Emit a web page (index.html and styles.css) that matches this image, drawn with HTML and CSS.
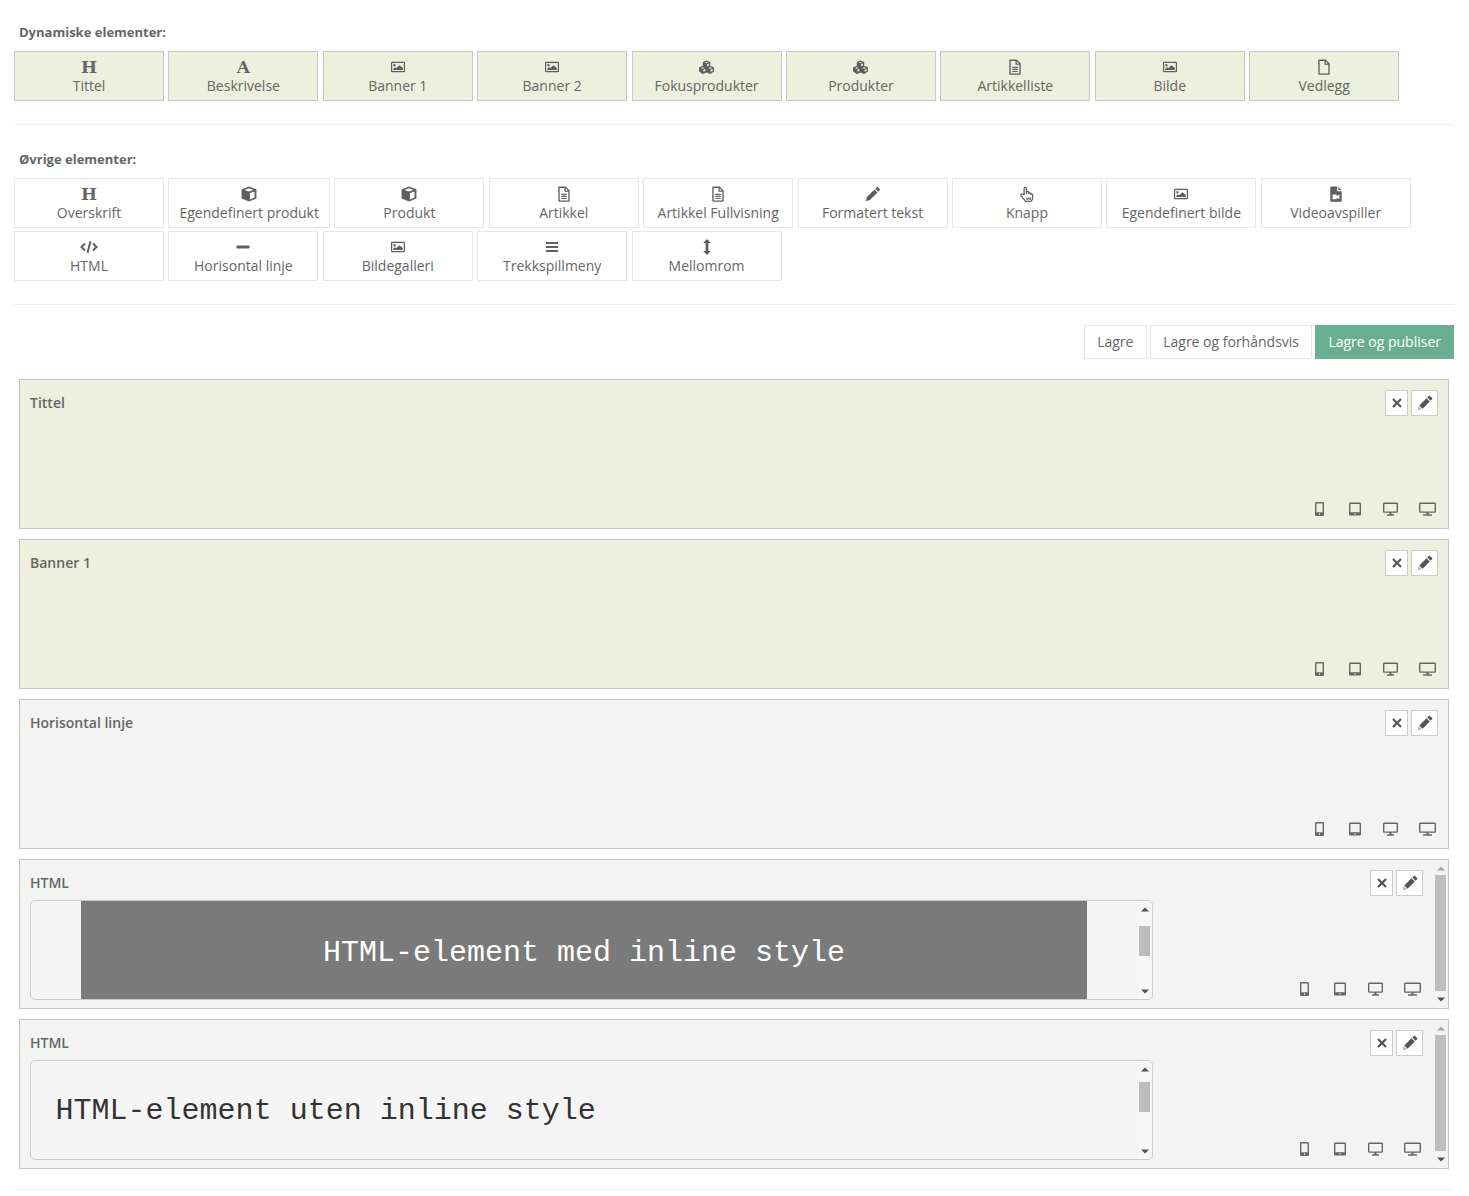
FILE: index.html
```html
<!DOCTYPE html>
<html lang="no">
<head>
<meta charset="utf-8">
<title>Elementer</title>
<link rel="stylesheet" href="styles.css">
</head>
<body>
<svg class="defs" width="0" height="0" aria-hidden="true">
  <symbol id="i-image" viewBox="0 0 14 14"><path fill-rule="evenodd" d="M1 1.700h12a1 1 0 0 1 1 1v8.600a1 1 0 0 1-1 1H1a1 1 0 0 1-1-1V2.700a1 1 0 0 1 1-1zM1.200 3v8h11.600V3zM3.400 4a1.200 1.200 0 1 1 0 2.400 1.200 1.200 0 0 1 0-2.400zM2.200 10V8.700l1.800-1.400 1.200 1 3.300-3.100L11.800 8v2z"/></symbol>
  <symbol id="i-cube" viewBox="0 0 14 14"><path fill-rule="evenodd" d="M7 .5l6.500 2.400v8L7 13.600.5 10.900v-8zM7 2L3 3.400 7 4.900l4-1.500zM7.800 6.300v5.500l4-1.700V4.800z"/></symbol>
  <symbol id="i-cubes" viewBox="0 0 16 14"><path fill-rule="evenodd" d="M8 .5l3.500 1.300v3.700l3.500 1.300v4L11.400 13 8 11.700 4.600 13 1 10.800v-4l3.500-1.300V1.800zM8 1.800L6.200 2.400 8 3.100l1.800-.7zM8.500 4v1.900l1.800-.7V3.300zM4.600 6.700l-1.800.7 1.800.7 1.800-.7zM11.400 6.700l-1.800.7 1.800.7 1.800-.7zM5.100 9v2l1.800-.8V8.300zM11.900 9v2l1.800-.8V8.300z"/></symbol>
  <symbol id="i-doc" viewBox="0 0 14 14"><path fill-rule="evenodd" d="M2.500.5h6L12 4v9a.8.8 0 0 1-.8.800H2.800A.8.800 0 0 1 2 13V1a.6.600 0 0 1 .500-.500zM3.200 1.700v10.900h7.600V5.100H7.400V1.700zM8.500 1.900V4h2zM4.600 6.800h4.800v1H4.600zM4.600 8.600h4.800v1H4.600zM4.600 10.400h4.800v1H4.600z"/></symbol>
  <symbol id="i-file" viewBox="0 0 14 14"><path fill-rule="evenodd" d="M2.500.5h6L12 4v9a.8.8 0 0 1-.8.800H2.800A.8.800 0 0 1 2 13V1a.6.600 0 0 1 .500-.500zM3.200 1.700v10.900h7.600V5.100H7.400V1.700zM8.500 1.900V4h2z"/></symbol>
  <symbol id="i-video" viewBox="0 0 14 14"><path fill-rule="evenodd" d="M2.500.5H8V4.500H12V13a.8.8 0 0 1-.8.800H2.800A.8.800 0 0 1 2 13V1a.6.600 0 0 1 .500-.500zM9 .8L11.800 3.500H9zM4 7.500v4h3.500v-1.300l2.500 1.300v-4L7.500 8.800V7.500z"/></symbol>
  <symbol id="i-pencil" viewBox="0 0 14 14"><path d="M10.300 1.100a.8.800 0 0 1 1.100 0l1.500 1.500a.8.800 0 0 1 0 1.100l-1.300 1.300-2.600-2.600zM8.300 3.100l2.600 2.600-6.600 6.600-3.600 1 1-3.600z"/></symbol>
  <symbol id="i-edit" viewBox="0 0 14 14"><path d="M10.300 .8a.8.800 0 0 1 1.100 0l1.800 1.800a.8.800 0 0 1 0 1.100l-1.300 1.300-2.900-2.900zM8.300 2.800l2.900 2.900-6.300 6.300-2.900-2.900z"/><path opacity=".45" d="M1.500 9.700l2.800 2.800-3.600 1z"/></symbol>
  <symbol id="i-hand" viewBox="0 0 14 14"><path fill="none" stroke="currentColor" stroke-width="1.100" stroke-linejoin="round" d="M4.500 7.500V2.200a1 1 0 0 1 2 0v4.300l.2-1a.9.9 0 0 1 1.800.2v.8a.9.900 0 0 1 1.700.1v.8a.9.900 0 0 1 1.700.2v3.100c0 1.100-.8 2.300-1.500 2.800H5.800L2 8.800c-.8-1 .3-2.300 1.300-1.600zM7 10v2M8.500 10v2M10 10v2"/></symbol>
  <symbol id="i-code" viewBox="0 0 18 14"><path fill="none" stroke="currentColor" stroke-width="2" d="M5 3.500L1.500 7 5 10.500M13 3.500L16.500 7 13 10.500M10.500 1.200L7.500 12.800"/></symbol>
  <symbol id="i-minus" viewBox="0 0 14 14"><rect x="0.500" y="5.600" width="13" height="2.800" rx=".6"/></symbol>
  <symbol id="i-bars" viewBox="0 0 14 14"><path d="M1 2h12v2H1zM1 6h12v2H1zM1 10h12v2H1z"/></symbol>
  <symbol id="i-vertical" viewBox="0 0 14 14"><path d="M7 0l3.400 3.500H8.200V10.500H10.400L7 14l-3.400-3.500H5.800V3.500H3.600z"/></symbol>
  <symbol id="i-close" viewBox="0 0 12 12"><path d="M2.800 1.200L6 4.400 9.200 1.200 10.800 2.800 7.600 6l3.200 3.200-1.600 1.600L6 7.600 2.800 10.800 1.200 9.200 4.400 6 1.200 2.800z"/></symbol>
  <symbol id="i-phone" viewBox="0 0 9 14"><path fill-rule="evenodd" d="M1.300 0h6.400A1.300 1.300 0 0 1 9 1.300v11.400A1.300 1.300 0 0 1 7.700 14H1.300A1.300 1.300 0 0 1 0 12.700V1.300A1.300 1.300 0 0 1 1.300 0zM1.400 1.400v8.800h6.200V1.400zM3.900 11.300v1.400h1.200v-1.400z"/></symbol>
  <symbol id="i-tablet" viewBox="0 0 12 14"><path fill-rule="evenodd" d="M1.300 .5h9.400A1.300 1.300 0 0 1 12 1.800v10.400a1.300 1.300 0 0 1-1.300 1.300H1.300A1.300 1.300 0 0 1 0 12.200V1.800A1.300 1.300 0 0 1 1.300 .5zM1.400 1.900v8.300h9.200V1.900zM5.400 11.200v1.300h1.200v-1.300z"/></symbol>
  <symbol id="i-monitor" viewBox="0 0 15 14"><path fill-rule="evenodd" d="M1.200 .5h12.600A1.200 1.200 0 0 1 15 1.700v7.900a1.200 1.200 0 0 1-1.200 1.200H8.600v1.500H11v1.500H4v-1.500h2.400v-1.500H1.200A1.200 1.200 0 0 1 0 9.600V1.700A1.200 1.200 0 0 1 1.200 .5zM1.400 1.900v7.500h12.200V1.900z"/></symbol>
  <symbol id="i-wide" viewBox="0 0 17 14"><path fill-rule="evenodd" d="M1.200 .5h14.600A1.200 1.200 0 0 1 17 1.700v7.900a1.200 1.200 0 0 1-1.200 1.200H9.600v1.500H13v1.500H4v-1.500h3.400v-1.500H1.200A1.200 1.200 0 0 1 0 9.600V1.700A1.200 1.200 0 0 1 1.200 .5zM1.400 1.900v7.500h14.200V1.900z"/></symbol>
  <symbol id="i-up" viewBox="0 0 8 5"><path d="M4 .5L8 4.500H0z"/></symbol>
  <symbol id="i-down" viewBox="0 0 8 5"><path d="M4 4.500L0 .5H8z"/></symbol>
</svg>

<main class="page">
  <section class="section section-first">
    <h2 class="section-title">Dynamiske elementer:</h2>
    <div class="tiles">
      <a class="tile tile-dyn"><span class="tile-icon glyph">H</span>Tittel</a>
      <a class="tile tile-dyn"><span class="tile-icon glyph">A</span>Beskrivelse</a>
      <a class="tile tile-dyn"><span class="tile-icon"><svg class="ico ico-img"><use href="#i-image"/></svg></span>Banner 1</a>
      <a class="tile tile-dyn"><span class="tile-icon"><svg class="ico ico-img"><use href="#i-image"/></svg></span>Banner 2</a>
      <a class="tile tile-dyn"><span class="tile-icon"><svg class="ico ico-wide"><use href="#i-cubes"/></svg></span>Fokusprodukter</a>
      <a class="tile tile-dyn"><span class="tile-icon"><svg class="ico ico-wide"><use href="#i-cubes"/></svg></span>Produkter</a>
      <a class="tile tile-dyn"><span class="tile-icon"><svg class="ico"><use href="#i-doc"/></svg></span>Artikkelliste</a>
      <a class="tile tile-dyn"><span class="tile-icon"><svg class="ico ico-img"><use href="#i-image"/></svg></span>Bilde</a>
      <a class="tile tile-dyn"><span class="tile-icon"><svg class="ico"><use href="#i-file"/></svg></span>Vedlegg</a>
    </div>
  </section>
  <hr class="rule">
  <section class="section">
    <h2 class="section-title">Øvrige elementer:</h2>
    <div class="tiles">
      <a class="tile"><span class="tile-icon glyph">H</span>Overskrift</a>
      <a class="tile tile-auto"><span class="tile-icon"><svg class="ico"><use href="#i-cube"/></svg></span>Egendefinert produkt</a>
      <a class="tile"><span class="tile-icon"><svg class="ico"><use href="#i-cube"/></svg></span>Produkt</a>
      <a class="tile"><span class="tile-icon"><svg class="ico"><use href="#i-doc"/></svg></span>Artikkel</a>
      <a class="tile"><span class="tile-icon"><svg class="ico"><use href="#i-doc"/></svg></span>Artikkel Fullvisning</a>
      <a class="tile"><span class="tile-icon"><svg class="ico"><use href="#i-pencil"/></svg></span>Formatert tekst</a>
      <a class="tile"><span class="tile-icon"><svg class="ico"><use href="#i-hand"/></svg></span>Knapp</a>
      <a class="tile"><span class="tile-icon"><svg class="ico ico-img"><use href="#i-image"/></svg></span>Egendefinert bilde</a>
      <a class="tile"><span class="tile-icon"><svg class="ico"><use href="#i-video"/></svg></span>Videoavspiller</a>
      <a class="tile"><span class="tile-icon"><svg class="ico ico-code"><use href="#i-code"/></svg></span>HTML</a>
      <a class="tile"><span class="tile-icon"><svg class="ico ico-img"><use href="#i-minus"/></svg></span>Horisontal linje</a>
      <a class="tile"><span class="tile-icon"><svg class="ico ico-img"><use href="#i-image"/></svg></span>Bildegalleri</a>
      <a class="tile"><span class="tile-icon"><svg class="ico ico-img"><use href="#i-bars"/></svg></span>Trekkspillmeny</a>
      <a class="tile"><span class="tile-icon"><svg class="ico"><use href="#i-vertical"/></svg></span>Mellomrom</a>
    </div>
  </section>
  <hr class="rule">
  <div class="toolbar">
    <button class="btn">Lagre</button>
    <button class="btn">Lagre og forhåndsvis</button>
    <button class="btn btn-primary">Lagre og publiser</button>
  </div>
  <div class="panels">
    <article class="panel panel-dyn">
      <div class="panel-main"><h3 class="panel-title">Tittel</h3></div>
      <div class="panel-side">
        <div class="actions">
          <a class="act act-x"><svg class="act-ico"><use href="#i-close"/></svg></a>
          <a class="act act-edit"><svg class="act-ico act-pen"><use href="#i-edit"/></svg></a>
        </div>
        <div class="devices">
          <svg class="dev dev-phone"><use href="#i-phone"/></svg>
          <svg class="dev dev-tablet"><use href="#i-tablet"/></svg>
          <svg class="dev dev-monitor"><use href="#i-monitor"/></svg>
          <svg class="dev dev-wide"><use href="#i-wide"/></svg>
        </div>
      </div>
    </article>
    <article class="panel panel-dyn">
      <div class="panel-main"><h3 class="panel-title">Banner 1</h3></div>
      <div class="panel-side">
        <div class="actions">
          <a class="act act-x"><svg class="act-ico"><use href="#i-close"/></svg></a>
          <a class="act act-edit"><svg class="act-ico act-pen"><use href="#i-edit"/></svg></a>
        </div>
        <div class="devices">
          <svg class="dev dev-phone"><use href="#i-phone"/></svg>
          <svg class="dev dev-tablet"><use href="#i-tablet"/></svg>
          <svg class="dev dev-monitor"><use href="#i-monitor"/></svg>
          <svg class="dev dev-wide"><use href="#i-wide"/></svg>
        </div>
      </div>
    </article>
    <article class="panel">
      <div class="panel-main"><h3 class="panel-title">Horisontal linje</h3></div>
      <div class="panel-side">
        <div class="actions">
          <a class="act act-x"><svg class="act-ico"><use href="#i-close"/></svg></a>
          <a class="act act-edit"><svg class="act-ico act-pen"><use href="#i-edit"/></svg></a>
        </div>
        <div class="devices">
          <svg class="dev dev-phone"><use href="#i-phone"/></svg>
          <svg class="dev dev-tablet"><use href="#i-tablet"/></svg>
          <svg class="dev dev-monitor"><use href="#i-monitor"/></svg>
          <svg class="dev dev-wide"><use href="#i-wide"/></svg>
        </div>
      </div>
    </article>
    <article class="panel panel-scroll">
      <div class="panel-main">
        <h3 class="panel-title">HTML</h3>
        <div class="code-box">
          <div class="code-view">
            <div class="code-band">HTML-element med inline style</div>
          </div>
          <div class="bar bar-inner">
            <svg class="arrow"><use href="#i-up"/></svg>
            <div class="bar-track bar-track-a"><div class="bar-thumb"></div></div>
            <svg class="arrow"><use href="#i-down"/></svg>
          </div>
        </div>
      </div>
      <div class="panel-side">
        <div class="actions">
          <a class="act act-x"><svg class="act-ico"><use href="#i-close"/></svg></a>
          <a class="act act-edit"><svg class="act-ico act-pen"><use href="#i-edit"/></svg></a>
        </div>
        <div class="devices">
          <svg class="dev dev-phone"><use href="#i-phone"/></svg>
          <svg class="dev dev-tablet"><use href="#i-tablet"/></svg>
          <svg class="dev dev-monitor"><use href="#i-monitor"/></svg>
          <svg class="dev dev-wide"><use href="#i-wide"/></svg>
        </div>
      </div>
      <div class="bar bar-outer">
        <svg class="arrow arrow-off"><use href="#i-up"/></svg>
        <div class="bar-thumb bar-thumb-outer"></div>
        <svg class="arrow arrow-end"><use href="#i-down"/></svg>
      </div>
    </article>
    <article class="panel panel-scroll">
      <div class="panel-main">
        <h3 class="panel-title">HTML</h3>
        <div class="code-box">
          <div class="code-view">
            <div class="code-plain">HTML-element uten inline style</div>
          </div>
          <div class="bar bar-inner">
            <svg class="arrow"><use href="#i-up"/></svg>
            <div class="bar-track bar-track-b"><div class="bar-thumb"></div></div>
            <svg class="arrow"><use href="#i-down"/></svg>
          </div>
        </div>
      </div>
      <div class="panel-side">
        <div class="actions">
          <a class="act act-x"><svg class="act-ico"><use href="#i-close"/></svg></a>
          <a class="act act-edit"><svg class="act-ico act-pen"><use href="#i-edit"/></svg></a>
        </div>
        <div class="devices">
          <svg class="dev dev-phone"><use href="#i-phone"/></svg>
          <svg class="dev dev-tablet"><use href="#i-tablet"/></svg>
          <svg class="dev dev-monitor"><use href="#i-monitor"/></svg>
          <svg class="dev dev-wide"><use href="#i-wide"/></svg>
        </div>
      </div>
      <div class="bar bar-outer">
        <svg class="arrow arrow-off"><use href="#i-up"/></svg>
        <div class="bar-thumb bar-thumb-outer"></div>
        <svg class="arrow arrow-end"><use href="#i-down"/></svg>
      </div>
    </article>
  </div>
  <hr class="rule rule-end">
</main>
</body>
</html>
```
FILE: styles.css
```css
* { box-sizing: border-box; }
html, body { margin: 0; padding: 0; background: #fff; }
body { font-family: "Open Sans", "Liberation Sans", sans-serif; font-size: 14px; color: #666; height: 1196px; overflow: hidden; }
.defs { position: absolute; }
.page { width: 1440px; margin-left: 14px; padding-top: 24px; }
.section-title { margin: 0 0 10px 5px; font-size: 13px; line-height: 17px; font-weight: 700; color: #666; }
.tiles { display: flex; flex-wrap: wrap; column-gap: 4.4px; row-gap: 3px; }
.tile { width: 150px; height: 50px; display: flex; flex-direction: column; align-items: center; padding-top: 6px; border: 1px solid #e8e8e8; background: #fff; color: #666; line-height: 19px; white-space: nowrap; }
.tile-auto { width: 161.6px; }
.tile-dyn { background: #edefdf; border-color: #c8c8c4; }
.tile-icon { height: 18px; display: flex; align-items: center; justify-content: center; color: #5e5e5e; }
.glyph { font-family: "DejaVu Serif", "Liberation Serif", serif; font-weight: 700; font-size: 17px; line-height: 18px; color: #666; }
.ico { width: 16px; height: 16px; fill: #5e5e5e; color: #5e5e5e; display: block; }
.ico-img { width: 14px; height: 14px; }
.ico-wide { width: 17px; height: 15px; }
.ico-code { width: 18px; height: 14px; }
.rule { height: 1px; margin: 0; border: 0; background: #eee; }
.section-first + .rule { margin-top: 23px; }
.section-first + .rule + .section { padding-top: 26px; }
.section + .rule { margin-top: 23px; }
.toolbar { display: flex; justify-content: flex-end; gap: 3px; margin-top: 20px; }
.btn { height: 34px; padding: 0 12.4px; border: 1px solid #e8e8e8; background: #fff; color: #666; font: 14px/20px "Open Sans", "Liberation Sans", sans-serif; }
.btn-primary { padding: 0 12px; background: #69ae92; border-color: #69ae92; color: #fff; }
.panels { display: flex; flex-direction: column; gap: 10px; margin: 20px 5px 0; }
.panel { height: 150px; display: flex; border: 1px solid #c4c4c4; background: #f3f3f3; }
.panel-dyn { background: #edefdf; }
.panel-main { flex: 1; min-width: 0; padding: 14px 0 0 10px; }
.panel-title { margin: 0 0 8px; font-size: 14px; line-height: 18px; font-weight: 600; color: #666; }
.panel-side { flex: none; width: 240px; display: flex; flex-direction: column; justify-content: space-between; align-items: flex-end; padding: 10px 10px 12px 0; }
.actions { display: flex; gap: 3px; }
.act { height: 26px; display: flex; align-items: center; justify-content: center; background: #fff; border: 1px solid #ccc; }
.act-x { width: 23px; }
.act-edit { width: 27px; }
.act-ico { width: 12px; height: 12px; fill: #555; }
.act-pen { width: 16px; height: 16px; }
.devices { display: flex; align-items: center; }
.dev { height: 14px; fill: #666; display: block; }
.dev-phone { width: 9px; margin-right: 25px; }
.dev-tablet { width: 12px; margin-right: 22px; }
.dev-monitor { width: 15px; margin-right: 21px; }
.dev-wide { width: 17px; margin-right: 2px; }
.panel-scroll .panel-main { flex: none; width: 1133px; }
.panel-scroll .panel-side { flex: 1; width: auto; padding-right: 10px; }
.code-box { display: flex; width: 1123px; height: 100px; border: 1px solid #ccc; border-radius: 5px; background: #f5f5f5; overflow: hidden; }
.code-view { flex: 1; min-width: 0; }
.code-band { width: 1006px; height: 98px; margin-left: 50px; padding-top: 2px; background: #7a7a7a; color: #fff; font: 30px/100px "Liberation Mono", monospace; text-align: center; white-space: nowrap; }
.code-plain { padding: 33px 0 0 24.6px; color: #333; font: 30px/34px "Liberation Mono", monospace; white-space: nowrap; }
.bar { flex: none; width: 15px; display: flex; flex-direction: column; align-items: center; justify-content: space-between; fill: #505050; }
.bar-inner { padding: 6px 0 5px; background: #f6f6f6; }
.bar-outer { padding: 6px 0; justify-content: flex-start; }
.arrow { width: 8px; height: 5px; display: block; flex: none; }
.arrow-off { fill: #a8a8a8; }
.arrow-end { margin-top: auto; }
.bar-track { flex: 1; width: 100%; display: flex; justify-content: center; }
.bar-track-a { padding-top: 14px; }
.bar-track-b { padding-top: 10px; }
.bar-thumb { width: 11px; height: 30px; background: #bdbdbd; }
.bar-thumb-outer { height: 116px; margin-top: 4px; }
.rule-end { margin-top: 20px; }
```
